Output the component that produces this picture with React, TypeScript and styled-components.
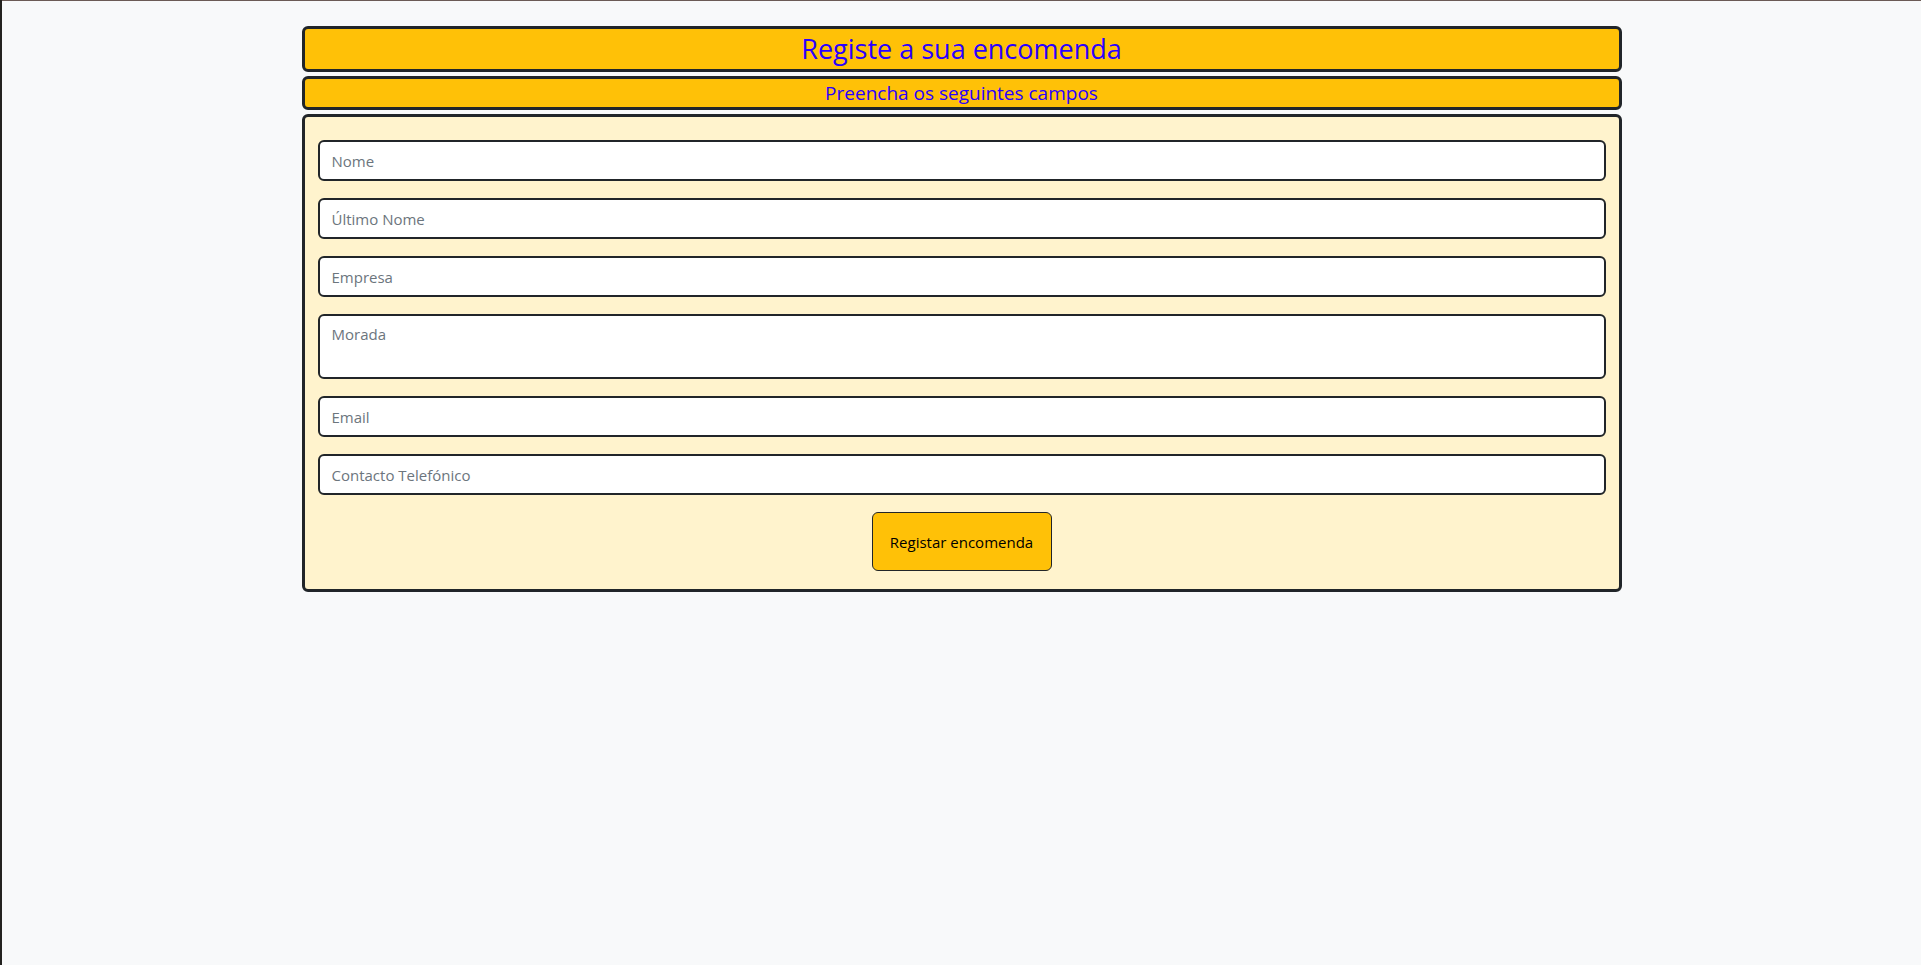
import React from "react";
import styled, { createGlobalStyle } from "styled-components";

const GlobalStyle = createGlobalStyle`
  html, body {
    margin: 0;
    padding: 0;
    background: #f8f9fa;
  }
  body {
    font-family: "Open Sans", "Noto Sans", sans-serif;
    color: #212529;
  }
  * { box-sizing: border-box; }
`;

const Frame = styled.div`
  display: flex;
  min-height: 965px;
`;

const EdgeStrip = styled.div`
  width: 2px;
  flex: 0 0 2px;
  background: #23221f;
`;

const Page = styled.main`
  flex: 1;
  background: #f8f9fa;
  border-top: 1px solid #6b5a55;
  padding-top: 25px;
`;

const Container = styled.div`
  width: 1320px;
  margin: 0 auto;
  display: flex;
  flex-direction: column;
  gap: 4px;
`;

const Banner = styled.div<{ $size: number; $height: number }>`
  height: ${(p) => p.$height}px;
  background: #ffc107;
  border: 3px solid #212529;
  border-radius: 6px;
  display: flex;
  align-items: center;
  justify-content: center;
  color: #2a00ff;
  font-size: ${(p) => p.$size}px;
  font-weight: 500;
  line-height: 1.2;
  margin: 0;
`;

const Title = styled(Banner).attrs({ as: "h3" })``;
const Subtitle = styled(Banner).attrs({ as: "h5" })``;

const FormCard = styled.form`
  background: #fff3cd;
  border: 3px solid #212529;
  border-radius: 6px;
  padding: 23px 13px 18px;
  display: flex;
  flex-direction: column;
  gap: 17px;
`;

const fieldStyles = `
  width: 100%;
  border: 2px solid #212529;
  border-radius: 6px;
  background: #ffffff;
  padding: 6px 12px;
  font-family: "Open Sans", "Noto Sans", sans-serif;
  font-size: 15px;
  line-height: 24px;
  color: #212529;
  outline: none;
  &::placeholder {
    color: #6c757d;
  }
`;

const Field = styled.input`
  ${fieldStyles}
  height: 41px;
`;

const Area = styled.textarea`
  ${fieldStyles}
  height: 65px;
  resize: none;
  display: block;
`;

const SubmitRow = styled.div`
  display: flex;
  justify-content: center;
`;

const SubmitButton = styled.button`
  width: 180px;
  height: 59px;
  background: #ffc107;
  border: 1px solid #212529;
  border-radius: 6px;
  font-family: "Open Sans", "Noto Sans", sans-serif;
  font-size: 15px;
  color: #000;
  cursor: pointer;
`;

const fields = ["Nome", "Último Nome", "Empresa"];
const fields2 = ["Email", "Contacto Telefónico"];

export default function App() {
  return (
    <>
      <GlobalStyle />
      <Frame>
        <EdgeStrip />
        <Page>
          <Container>
            <Title $size={27} $height={46}>
              Registe a sua encomenda
            </Title>
            <Subtitle $size={19} $height={34}>
              Preencha os seguintes campos
            </Subtitle>
            <FormCard onSubmit={(e) => e.preventDefault()}>
              {fields.map((f) => (
                <Field key={f} type="text" placeholder={f} />
              ))}
              <Area placeholder="Morada" rows={2} />
              {fields2.map((f) => (
                <Field key={f} type="text" placeholder={f} />
              ))}
              <SubmitRow>
                <SubmitButton type="submit">Registar encomenda</SubmitButton>
              </SubmitRow>
            </FormCard>
          </Container>
        </Page>
      </Frame>
    </>
  );
}
